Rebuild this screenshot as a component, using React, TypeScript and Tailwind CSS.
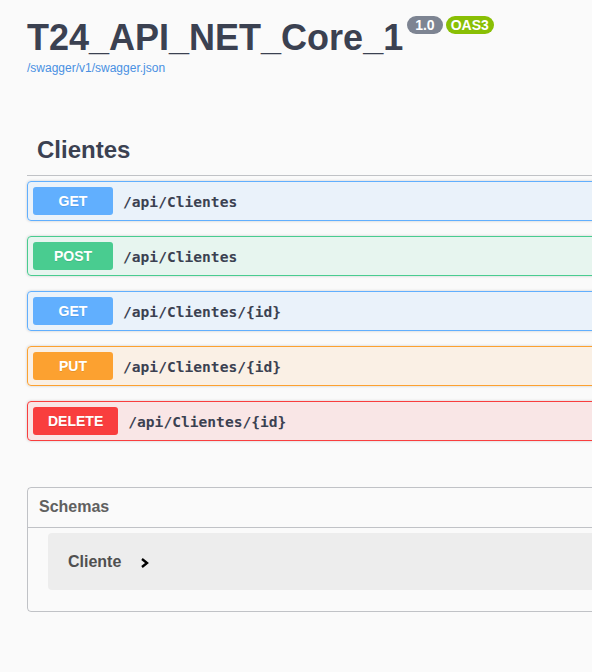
const ops = [
  { method: 'GET', path: '/api/Clientes', border: 'border-[#61affe]', bg: 'bg-[#61affe]/10', badge: 'bg-[#61affe]' },
  { method: 'POST', path: '/api/Clientes', border: 'border-[#49cc90]', bg: 'bg-[#49cc90]/10', badge: 'bg-[#49cc90]' },
  { method: 'GET', path: '/api/Clientes/{id}', border: 'border-[#61affe]', bg: 'bg-[#61affe]/10', badge: 'bg-[#61affe]' },
  { method: 'PUT', path: '/api/Clientes/{id}', border: 'border-[#fca130]', bg: 'bg-[#fca130]/10', badge: 'bg-[#fca130]' },
  { method: 'DELETE', path: '/api/Clientes/{id}', border: 'border-[#f93e3e]', bg: 'bg-[#f93e3e]/10', badge: 'bg-[#f93e3e]' },
];

function Operation({ method, path, border, bg, badge }: (typeof ops)[number]) {
  return (
    <div className={`mb-[15px] rounded border ${border} ${bg} shadow-[0_0_3px_rgba(0,0,0,0.19)]`}>
      <div className="flex items-center p-[5px]">
        <span
          className={`${badge} min-w-[80px] rounded-[3px] px-[15px] py-[6px] text-center text-[14px] leading-[16px] font-bold text-white text-shadow-[0_1px_0_rgba(0,0,0,0.1)]`}
        >
          {method}
        </span>
        <span className="pl-[10px] pt-[1px] font-['DejaVu_Sans_Mono',monospace] text-[14.6px] font-bold text-[#3b4151]">
          {path}
        </span>
      </div>
    </div>
  );
}

export default function App() {
  return (
    <div className="h-[672px] w-[592px] overflow-hidden bg-[#fafafa] font-['Liberation_Sans',Arial,sans-serif] text-[#3b4151]">
      <div className="w-[1000px] pl-[27px]">
        <div className="pt-[20px]">
          <div className="flex items-start">
            <h2 className="text-[36px] leading-[36px] font-bold">T24_API_NET_Core_1</h2>
            <span className="ml-[4px] mt-[-4px] rounded-full bg-[#7d8492] px-[8px] text-[14px] leading-[18px] font-bold text-white">
              1.0
            </span>
            <span className="ml-[3px] mt-[-4px] rounded-full bg-[#89bf04] px-[5px] text-[14px] leading-[18px] font-bold text-white">
              OAS3
            </span>
          </div>
          <a className="mt-[4px] block text-[12px] leading-[16px] text-[#4990e2]">/swagger/v1/swagger.json</a>
        </div>

        <section className="mt-[59px]">
          <h3 className="border-b border-[#3b4151]/30 pb-[10px] pl-[10px] text-[24px] leading-[30px] font-bold">
            Clientes
          </h3>
          <div className="mt-[5px]">
            {ops.map((op, i) => (
              <Operation key={i} {...op} />
            ))}
          </div>
        </section>

        <section className="mt-[46px] rounded border border-[#3b4151]/30">
          <h4 className="border-b border-[#3b4151]/30 pt-[9px] pb-[10px] pl-[11px] text-[16px] leading-[20px] font-bold text-[#606060]">
            Schemas
          </h4>
          <div className="px-[20px] pt-[5px] pb-[21px]">
            <div className="flex h-[57px] items-center gap-[19px] rounded bg-black/5 pl-[20px]">
              <span className="text-[16px] font-bold text-[#505050]">Cliente</span>
              <svg width="10" height="12" viewBox="0 0 10 12" className="mt-[2px]">
                <path d="M2 2 L7 6 L2 10" fill="none" stroke="#000" strokeWidth="2.4" />
              </svg>
            </div>
          </div>
        </section>
      </div>
    </div>
  );
}
